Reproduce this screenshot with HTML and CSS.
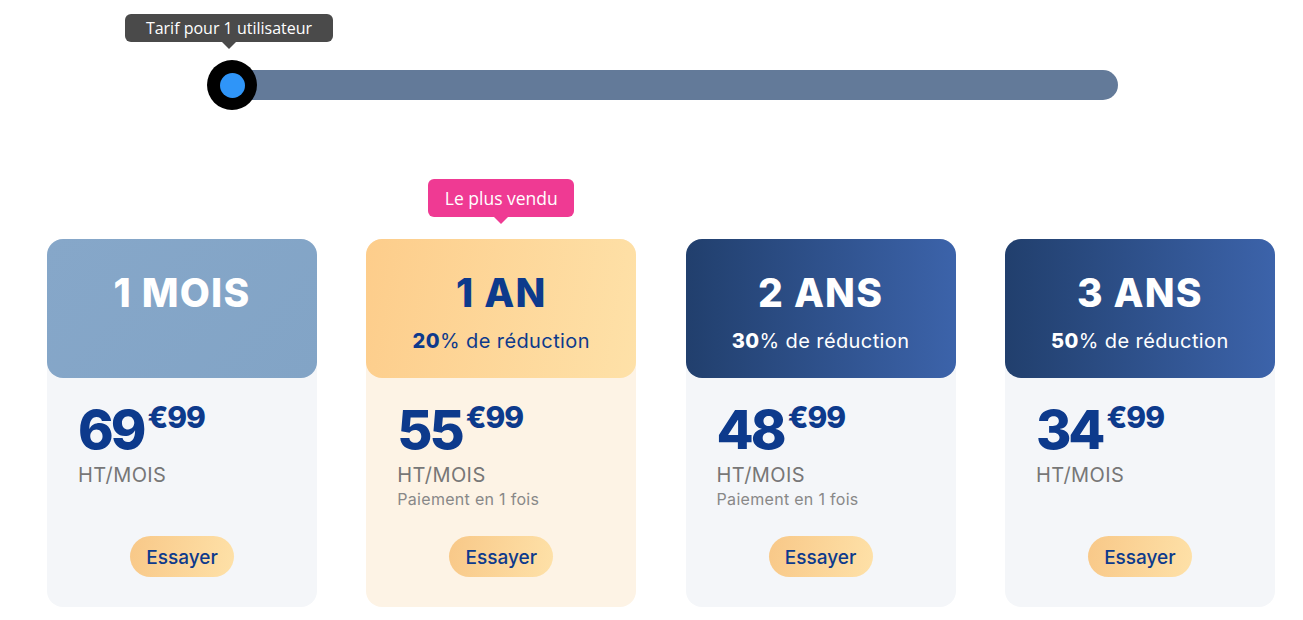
FILE: index.html
```html
<!DOCTYPE html>
<html lang="fr">
<head>
<meta charset="utf-8">
<title>Tarifs</title>
<link rel="stylesheet" href="styles.css">
</head>
<body>
<section class="slider">
  <div class="track">
    <div class="knob"><span class="knob-dot"></span></div>
    <div class="tip">Tarif pour 1 utilisateur</div>
  </div>
</section>
<section class="plans">
  <article class="card">
    <header class="card-head head-light">
      <h2 class="title">1 MOIS</h2>
    </header>
    <div class="card-body">
      <p class="price">69<sup class="cents">€99</sup></p>
      <p class="unit">HT/MOIS</p>
      <p class="note">&nbsp;</p>
      <button class="try">Essayer</button>
    </div>
  </article>
  <article class="card card-best">
    <div class="badge">Le plus vendu</div>
    <header class="card-head head-gold">
      <h2 class="title">1 AN</h2>
      <p class="discount"><b>20</b>% de réduction</p>
    </header>
    <div class="card-body">
      <p class="price">55<sup class="cents">€99</sup></p>
      <p class="unit">HT/MOIS</p>
      <p class="note">Paiement en 1 fois</p>
      <button class="try">Essayer</button>
    </div>
  </article>
  <article class="card">
    <header class="card-head head-dark">
      <h2 class="title">2 ANS</h2>
      <p class="discount"><b>30</b>% de réduction</p>
    </header>
    <div class="card-body">
      <p class="price">48<sup class="cents">€99</sup></p>
      <p class="unit">HT/MOIS</p>
      <p class="note">Paiement en 1 fois</p>
      <button class="try">Essayer</button>
    </div>
  </article>
  <article class="card">
    <header class="card-head head-dark">
      <h2 class="title">3 ANS</h2>
      <p class="discount"><b>50</b>% de réduction</p>
    </header>
    <div class="card-body">
      <p class="price">34<sup class="cents">€99</sup></p>
      <p class="unit">HT/MOIS</p>
      <p class="note">&nbsp;</p>
      <button class="try">Essayer</button>
    </div>
  </article>
</section>
</body>
</html>
```
FILE: styles.css
```css
* { box-sizing: border-box; }
html, body { margin: 0; padding: 0; background: #fff; }
body {
  font-family: "Inter", "Noto Sans", sans-serif;
  width: 1303px;
  height: 620px;
  overflow: hidden;
}
.slider {
  padding: 70px 0 0 232px;
  height: 179px;
}
.track {
  position: relative;
  width: 886px;
  height: 30px;
  background: #637a99;
  border-radius: 0 15px 15px 0;
}
.knob {
  position: absolute;
  left: -25px;
  top: -10px;
  width: 50px;
  height: 50px;
  border-radius: 50%;
  background: #000;
  display: flex;
  align-items: center;
  justify-content: center;
}
.knob-dot {
  width: 25px;
  height: 25px;
  border-radius: 50%;
  background: #2f95f8;
}
.tip {
  position: absolute;
  left: -107px;
  top: -56px;
  width: 208px;
  height: 28px;
  background: #4a4a4a;
  color: #fff;
  border-radius: 6px;
  font-family: "Open Sans", sans-serif;
  font-size: 16px;
  line-height: 28px;
  text-align: center;
}
.tip::after {
  content: "";
  position: absolute;
  left: 97px;
  top: 28px;
  border: 7px solid transparent;
  border-top-color: #4a4a4a;
  border-bottom: 0;
}
.plans {
  display: grid;
  grid-template-columns: repeat(4, 270px);
  column-gap: 49.3px;
  padding: 60px 0 0 47px;
}
.card {
  position: relative;
  height: 368px;
  border-radius: 16px;
  background: #f4f6f9;
  display: flex;
  flex-direction: column;
}
.card-best { background: #fdf3e5; }
.card-head {
  height: 139px;
  border-radius: 16px;
  display: flex;
  flex-direction: column;
  align-items: center;
  padding-top: 33px;
}
.head-light { background: linear-gradient(135deg, #86a7c9, #82a4c6); color: #fff; }
.head-gold { background: linear-gradient(100deg, #fdcd8b, #fee1a8); color: #0d3a8c; }
.head-dark { background: linear-gradient(90deg, #213f6d, #3c63aa); color: #fff; }
.title {
  margin: 0;
  font-size: 39px;
  font-weight: 800;
  line-height: 42px;
  letter-spacing: 1.2px;
}
.discount {
  margin: 14px 0 0;
  font-size: 20px;
  font-weight: 400;
  line-height: 26px;
  letter-spacing: 0.4px;
}
.discount b { font-weight: 800; }
.card-body {
  flex: 1;
  padding: 22px 31px 0;
  display: flex;
  flex-direction: column;
  align-items: flex-start;
}
.price {
  margin: 0;
  color: #0d3a8c;
  font-size: 54px;
  font-weight: 800;
  line-height: 60px;
  letter-spacing: -3px;
}
.cents {
  font-size: 30px;
  font-weight: 800;
  vertical-align: top;
  line-height: 30px;
  position: relative;
  top: 2px;
  margin-left: 4px;
  letter-spacing: -1px;
}
.unit {
  margin: 3px 0 0;
  font-size: 20px;
  color: #777;
  line-height: 24px;
  letter-spacing: 0.4px;
}
.note {
  margin: 2px 0 0;
  font-size: 16px;
  color: #888;
  line-height: 20px;
  letter-spacing: 0.3px;
}
.try {
  align-self: center;
  margin-top: 27px;
  width: 104px;
  height: 41px;
  padding: 2px 0 0;
  border: 0;
  border-radius: 21px;
  background: linear-gradient(100deg, #f8c888, #fee1a8);
  color: #0d3a8c;
  font-family: "Inter", sans-serif;
  font-size: 19px;
  font-weight: 500;
  cursor: pointer;
}
.badge {
  position: absolute;
  left: 62px;
  top: -60px;
  width: 146px;
  height: 38px;
  background: #ef3a93;
  color: #fff;
  border-radius: 6px;
  font-family: "Open Sans", sans-serif;
  font-size: 17.5px;
  line-height: 38px;
  text-align: center;
}
.badge::after {
  content: "";
  position: absolute;
  left: 66px;
  top: 38px;
  border: 7px solid transparent;
  border-top-color: #ef3a93;
  border-bottom: 0;
}
```
